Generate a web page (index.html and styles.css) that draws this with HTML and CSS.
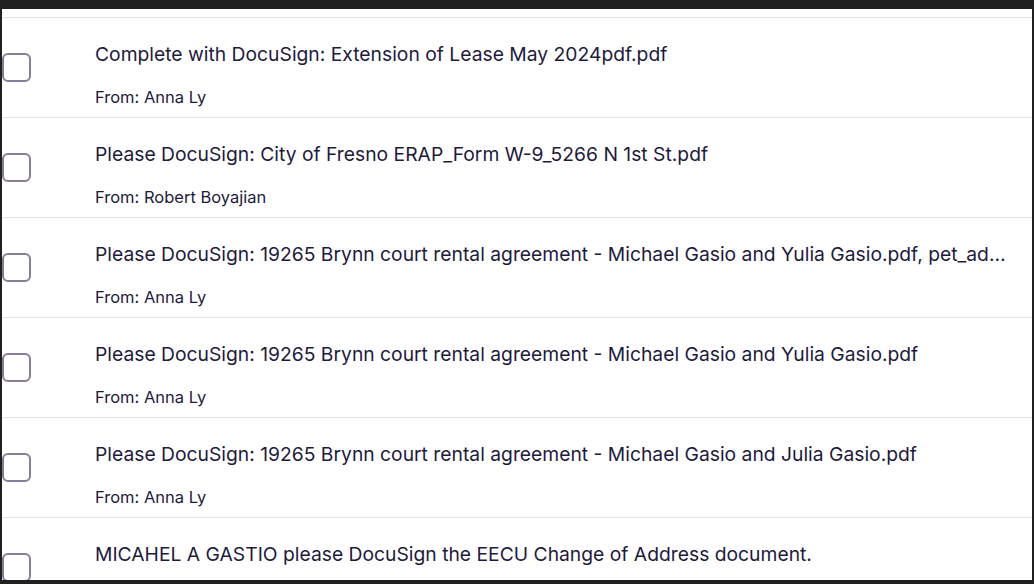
FILE: index.html
```html
<!DOCTYPE html>
<html>
<head>
<meta charset="utf-8">
<link rel="stylesheet" href="styles.css">
</head>
<body>
<div class="frame">
  <ul class="list">
    <li class="row">
      <span class="check"></span>
      <div class="text">
        <div class="title">Complete with DocuSign: Extension of Lease May 2024pdf.pdf</div>
        <div class="from">From: Anna Ly</div>
      </div>
    </li>
    <li class="row">
      <span class="check"></span>
      <div class="text">
        <div class="title">Please DocuSign: City of Fresno ERAP_Form W-9_5266 N 1st St.pdf</div>
        <div class="from">From: Robert Boyajian</div>
      </div>
    </li>
    <li class="row">
      <span class="check"></span>
      <div class="text">
        <div class="title">Please DocuSign: 19265 Brynn court rental agreement - Michael Gasio and Yulia Gasio.pdf, pet_addendum.pdf</div>
        <div class="from">From: Anna Ly</div>
      </div>
    </li>
    <li class="row">
      <span class="check"></span>
      <div class="text">
        <div class="title">Please DocuSign: 19265 Brynn court rental agreement - Michael Gasio and Yulia Gasio.pdf</div>
        <div class="from">From: Anna Ly</div>
      </div>
    </li>
    <li class="row">
      <span class="check"></span>
      <div class="text">
        <div class="title">Please DocuSign: 19265 Brynn court rental agreement - Michael Gasio and Julia Gasio.pdf</div>
        <div class="from">From: Anna Ly</div>
      </div>
    </li>
    <li class="row">
      <span class="check"></span>
      <div class="text">
        <div class="title">MICAHEL A GASTIO please DocuSign the EECU Change of Address document.</div>
      </div>
    </li>
  </ul>
</div>
</body>
</html>
```
FILE: styles.css
```css
html, body {
  margin: 0;
  padding: 0;
  background: #202020;
  height: 584px;
  overflow: hidden;
}
.frame {
  margin: 9px 2px 0 2px;
  height: 571px;
  background: #ffffff;
  overflow: hidden;
}
.list {
  list-style: none;
  margin: 0;
  padding: 8px 0 0 0;
}
.row {
  display: flex;
  align-items: center;
  height: 99px;
  border-top: 1px solid #e2e2e2;
  padding-right: 20px;
}
.check {
  flex: none;
  width: 25px;
  height: 25px;
  border: 2px solid #887c9b;
  border-radius: 6px;
  margin-right: 64px;
}
.text {
  flex: 1;
  min-width: 0;
  align-self: flex-start;
  padding-top: 24px;
  display: flex;
  flex-direction: column;
  gap: 21px;
  font-family: "Inter", "Liberation Sans", sans-serif;
  color: #1e1a3c;
}
.title {
  font-size: 19.3px;
  line-height: 24px;
  white-space: nowrap;
  overflow: hidden;
  text-overflow: ellipsis;
}
.from {
  font-size: 16.5px;
  line-height: 20px;
}
```
